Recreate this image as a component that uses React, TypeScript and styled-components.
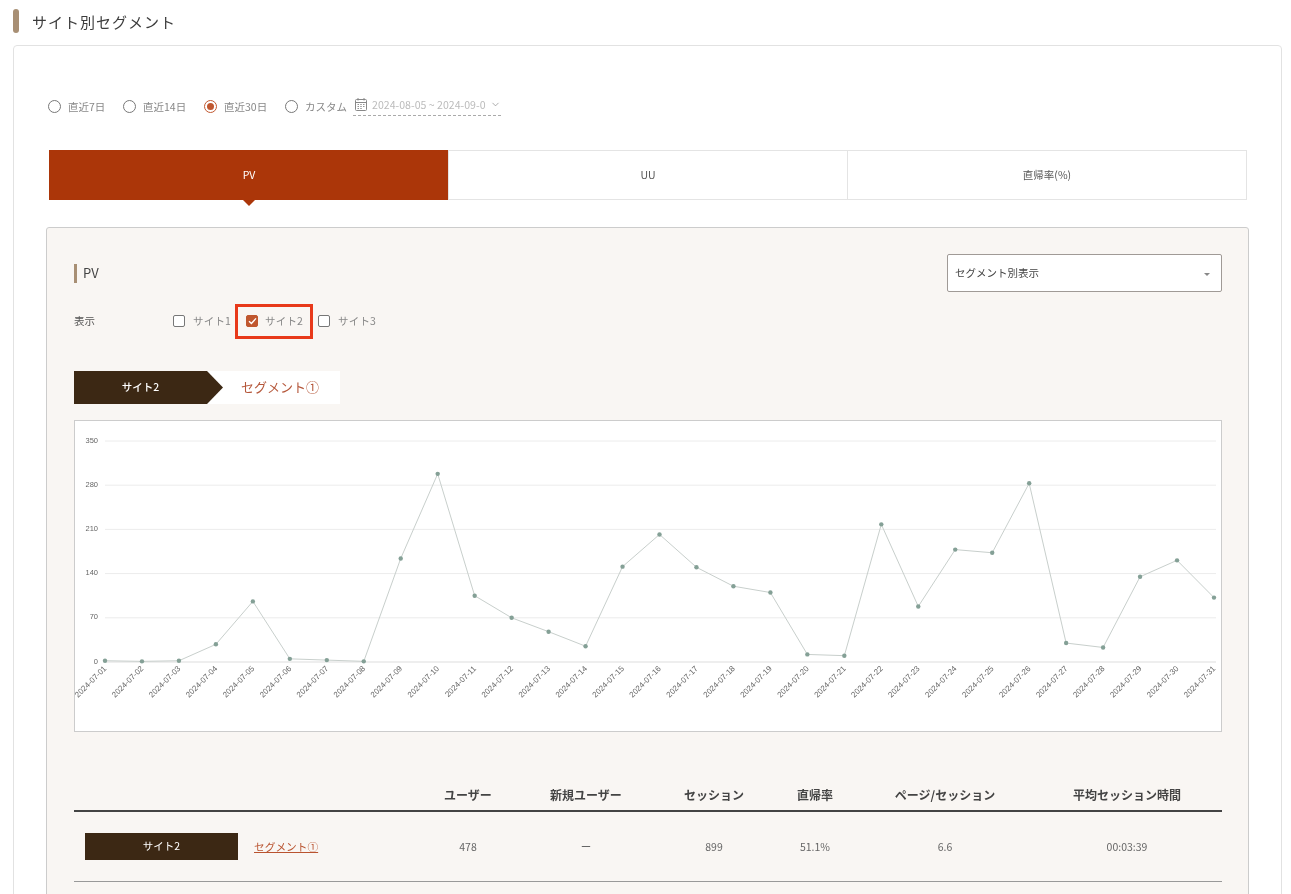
import { createGlobalStyle, styled } from 'styled-components';
import { ChevronDown } from 'lucide-react';

const FONT = `"Noto Sans CJK JP", "Noto Sans", sans-serif`;

const PV_VALUES = [
  2, 1, 2, 28, 96, 5, 3, 1, 164, 298, 105, 70, 48, 25, 151, 202, 150, 120, 110,
  12, 10, 218, 88, 178, 173, 283, 30, 23, 135, 161, 102,
];
const Y_TICKS = [350, 280, 210, 140, 70, 0];
const PLOT = { left: 30, right: 1139, top: 20, bottom: 241, gridEnd: 1141 };

const RANGES = [
  { label: '直近7日', width: 75, checked: false },
  { label: '直近14日', width: 81, checked: false },
  { label: '直近30日', width: 81, checked: true },
  { label: 'カスタム', width: 68, checked: false },
];
const TABS = ['PV', 'UU', '直帰率(%)'];
const SITES = [
  { label: 'サイト1', checked: false },
  { label: 'サイト2', checked: true },
  { label: 'サイト3', checked: false },
];
const COLUMNS = [
  { head: 'ユーザー', value: '478', width: 96 },
  { head: '新規ユーザー', value: 'ー', width: 140 },
  { head: 'セッション', value: '899', width: 116 },
  { head: '直帰率', value: '51.1%', width: 86 },
  { head: 'ページ/セッション', value: '6.6', width: 174 },
  { head: '平均セッション時間', value: '00:03:39', width: 190 },
];

const xAt = (i: number) => PLOT.left + (i * (PLOT.right - PLOT.left)) / 30;
const yAt = (v: number) =>
  PLOT.bottom - (v * (PLOT.bottom - PLOT.top)) / 350;
const dateLabel = (i: number) =>
  `2024-07-${String(i + 1).padStart(2, '0')}`;

function LineChart() {
  const line = PV_VALUES.map((v, i) => `${xAt(i)},${yAt(v)}`).join(' ');

  return (
    <ChartSvg viewBox="0 0 1146 310">
      {Y_TICKS.map((tick) => (
        <g key={tick}>
          <line
            x1={PLOT.left}
            x2={PLOT.gridEnd}
            y1={yAt(tick)}
            y2={yAt(tick)}
            stroke={tick === 0 ? '#e8e8e8' : '#ececec'}
            strokeWidth={tick === 0 ? 1.5 : 1}
          />
          <text
            x={23}
            y={yAt(tick) + 1.5}
            textAnchor="end"
            fontSize="7.5"
            fill="#666"
          >
            {tick}
          </text>
        </g>
      ))}
      <polyline points={line} fill="none" stroke="#c8cfcc" strokeWidth="1" />
      {PV_VALUES.map((v, i) => (
        <circle key={i} cx={xAt(i)} cy={yAt(v)} r="2.2" fill="#84a096" />
      ))}
      {PV_VALUES.map((_, i) => (
        <text
          key={i}
          x={xAt(i) + 2}
          y={248}
          textAnchor="end"
          fontSize="8"
          fill="#666"
          transform={`rotate(-45 ${xAt(i) + 2} 248)`}
        >
          {dateLabel(i)}
        </text>
      ))}
    </ChartSvg>
  );
}

function CalendarIcon() {
  return (
    <svg width="15" height="15" viewBox="0 0 15 15" fill="none" stroke="#888">
      <rect x="2.5" y="2.5" width="11" height="11" rx="1" />
      <path d="M2.5 5.5 H13.5 M5 1 V3.5 M11 1 V3.5" />
      <path
        d="M4.5 7.5 H6 M7.25 7.5 H8.75 M10 7.5 H11.5 M4.5 9.5 H6 M7.25 9.5 H8.75 M10 9.5 H11.5 M4.5 11.5 H6 M7.25 11.5 H8.75"
        strokeWidth="0.9"
      />
    </svg>
  );
}

function App() {
  return (
    <Page>
      <GlobalStyle />
      <PageTitle>サイト別セグメント</PageTitle>
      <Card>
        <RangeRow>
          {RANGES.map((range) => (
            <RangeOption key={range.label} $width={range.width}>
              <Radio $checked={range.checked} />
              <RangeLabel>{range.label}</RangeLabel>
            </RangeOption>
          ))}
          <DatePicker>
            <CalendarIcon />
            <DateText>2024-08-05 ~ 2024-09-03</DateText>
            <ChevronDown size={11} strokeWidth={1.5} color="#888" />
          </DatePicker>
        </RangeRow>

        <Tabs>
          {TABS.map((tab, i) => (
            <Tab key={tab} $active={i === 0}>
              {tab}
            </Tab>
          ))}
        </Tabs>

        <Panel>
          <PanelHead>
            <PanelTitle>PV</PanelTitle>
            <Select>
              セグメント別表示
              <SelectCaret />
            </Select>
          </PanelHead>

          <DisplayRow>
            <DisplayLabel>表示</DisplayLabel>
            {SITES.map((site) => (
              <SiteOption key={site.label} $highlight={site.checked}>
                <Checkbox $checked={site.checked}>
                  {site.checked && (
                    <svg width="9" height="8" viewBox="0 0 9 8">
                      <path
                        d="M1 4.2 L3.4 6.4 L8 1.4"
                        fill="none"
                        stroke="#fff"
                        strokeWidth="1.4"
                      />
                    </svg>
                  )}
                </Checkbox>
                <SiteLabel>{site.label}</SiteLabel>
              </SiteOption>
            ))}
          </DisplayRow>

          <Stepper>
            <StepCurrent>サイト2</StepCurrent>
            <StepNext>セグメント①</StepNext>
          </Stepper>

          <ChartBox>
            <LineChart />
          </ChartBox>

          <Table>
            <HeadRow>
              <NameCell />
              {COLUMNS.map((col) => (
                <HeadCell key={col.head} $width={col.width}>
                  {col.head}
                </HeadCell>
              ))}
            </HeadRow>
            <BodyRow>
              <NameCell>
                <SiteBadge>サイト2</SiteBadge>
                <SegmentLink>セグメント①</SegmentLink>
              </NameCell>
              {COLUMNS.map((col) => (
                <BodyCell key={col.head} $width={col.width}>
                  {col.value}
                </BodyCell>
              ))}
            </BodyRow>
          </Table>
        </Panel>
      </Card>
    </Page>
  );
}

const GlobalStyle = createGlobalStyle`
  html, body {
    margin: 0;
    padding: 0;
    background: #fff;
    font-family: ${FONT};
    color: #333;
  }
  * {
    box-sizing: border-box;
  }
`;

const Page = styled.div`
  height: 894px;
  overflow: hidden;
  padding: 9px 9px 0 13px;
  will-change: transform;
`;

const PageTitle = styled.h1`
  display: flex;
  gap: 13px;
  height: 24px;
  margin: 0 0 12px;
  font-size: 15px;
  font-weight: 400;
  line-height: 26px;
  letter-spacing: 1px;
  color: #3c3c3c;

  &::before {
    content: '';
    width: 6px;
    height: 24px;
    border-radius: 3px;
    background: #a88f74;
  }
`;

const Card = styled.div`
  height: 900px;
  padding: 0 32px;
  border: 1px solid #e2e2e2;
  border-radius: 4px;
`;

const RangeRow = styled.div`
  display: flex;
  align-items: center;
  height: 22px;
  margin-top: 49px;
  padding-left: 2px;
`;

const RangeOption = styled.label<{ $width: number }>`
  display: flex;
  align-items: center;
  gap: 7px;
  width: ${(props) => props.$width}px;
`;

const Radio = styled.span<{ $checked: boolean }>`
  flex: none;
  position: relative;
  width: 13px;
  height: 13px;
  border: 1px solid ${(props) => (props.$checked ? '#c0572f' : '#777')};
  border-radius: 50%;
  background: #fff;

  &::after {
    content: '';
    display: ${(props) => (props.$checked ? 'block' : 'none')};
    position: absolute;
    inset: 2px;
    border-radius: 50%;
    background: #c0572f;
  }
`;

const RangeLabel = styled.span`
  font-size: 10.5px;
  color: #888;
  white-space: nowrap;
`;

const DatePicker = styled.div`
  display: flex;
  align-items: center;
  align-self: flex-start;
  gap: 4px;
  width: 148px;
  height: 21px;
  padding-bottom: 2px;
  border-bottom: 1px dashed #aaa;
`;

const DateText = styled.span`
  flex: none;
  width: 114px;
  overflow: hidden;
  font-size: 10.6px;
  color: #bbb;
  white-space: nowrap;
`;

const Tabs = styled.div`
  display: flex;
  margin: 33px 3px 0 3px;
`;

const Tab = styled.div<{ $active: boolean }>`
  position: relative;
  flex: 1;
  height: 50px;
  margin-right: -1px;
  border: 1px solid ${(props) => (props.$active ? '#ab3609' : '#e4e4e4')};
  background: ${(props) => (props.$active ? '#ab3609' : '#fff')};
  color: ${(props) => (props.$active ? '#fff' : '#555')};
  font-size: 10.5px;
  line-height: 48px;
  text-align: center;

  &::after {
    content: '';
    display: ${(props) => (props.$active ? 'block' : 'none')};
    position: absolute;
    left: 50%;
    top: 49px;
    margin-left: -6px;
    border-style: solid;
    border-width: 6px 6px 0;
    border-color: #ab3609 transparent transparent;
  }
`;

const Panel = styled.div`
  height: 800px;
  margin-top: 27px;
  padding: 26px 26px 0 27px;
  border: 1px solid #ccc;
  border-radius: 3px;
  background: #f9f6f3;
`;

const PanelHead = styled.div`
  display: flex;
  justify-content: space-between;
  align-items: center;
  height: 38px;
`;

const PanelTitle = styled.h2`
  height: 19px;
  margin: 0;
  padding-left: 6px;
  border-left: 3px solid #a88f74;
  font-size: 13px;
  font-weight: 400;
  line-height: 18px;
  color: #444;
`;

const Select = styled.div`
  position: relative;
  width: 275px;
  height: 38px;
  padding-left: 7px;
  border: 1px solid #a09a96;
  border-radius: 2px;
  background: #fff;
  font-size: 10.5px;
  line-height: 35px;
  color: #444;
`;

const SelectCaret = styled.span`
  position: absolute;
  right: 11px;
  top: 18px;
  border-style: solid;
  border-width: 3.5px 3.5px 0;
  border-color: #888 transparent transparent;
`;

const DisplayRow = styled.div`
  display: flex;
  align-items: center;
  height: 35px;
  margin-top: 12px;
`;

const DisplayLabel = styled.div`
  width: 94px;
  margin-top: -2px;
  font-size: 10.5px;
  color: #555;
`;

const SiteOption = styled.label<{ $highlight: boolean }>`
  display: flex;
  align-items: center;
  gap: ${(props) => (props.$highlight ? '7px' : '8px')};
  height: 35px;
  margin-left: ${(props) => (props.$highlight ? '-1px' : '0')};
  padding: ${(props) => (props.$highlight ? '0 7px 2px 8px' : '0 2px 2px')};
  border: 3px solid ${(props) => (props.$highlight ? '#e8391a' : 'transparent')};
`;

const Checkbox = styled.span<{ $checked: boolean }>`
  display: flex;
  align-items: center;
  justify-content: center;
  width: 12px;
  height: 12px;
  border: 1px solid ${(props) => (props.$checked ? '#c0572f' : '#777')};
  border-radius: 2px;
  background: ${(props) => (props.$checked ? '#c0572f' : '#fff')};
`;

const SiteLabel = styled.span`
  width: 38px;
  font-size: 10.5px;
  letter-spacing: 0.2px;
  color: #888;
  white-space: nowrap;
`;

const Stepper = styled.div`
  display: flex;
  width: 266px;
  height: 33px;
  margin-top: 32px;
  background: #fff;
`;

const StepCurrent = styled.div`
  width: 149px;
  padding-right: 16px;
  clip-path: polygon(0 0, 133px 0, 100% 50%, 133px 100%, 0 100%);
  background: #3c2814;
  color: #fff;
  font-size: 10.5px;
  font-weight: 500;
  line-height: 31px;
  text-align: center;
`;

const StepNext = styled.div`
  flex: 1;
  padding-left: 18px;
  color: #b5573a;
  font-size: 13px;
  font-weight: 400;
  line-height: 31px;
  white-space: nowrap;
`;

const ChartBox = styled.div`
  height: 312px;
  margin-top: 16px;
  border: 1px solid #ccc;
  background: #fff;
`;

const ChartSvg = styled.svg`
  display: block;
  width: 1146px;
  height: 310px;
  font-family: 'Liberation Sans', sans-serif;
`;

const Table = styled.div`
  margin-top: 49px;
`;

const HeadRow = styled.div`
  display: flex;
  align-items: center;
  height: 31px;
  border-bottom: 2px solid #444;
`;

const BodyRow = styled.div`
  display: flex;
  align-items: center;
  height: 70px;
  border-bottom: 1px solid #999;
`;

const NameCell = styled.div`
  display: flex;
  align-items: center;
  flex: 1;
  padding-left: 11px;
`;

const HeadCell = styled.div<{ $width: number }>`
  flex: none;
  width: ${(props) => props.$width}px;
  margin-top: -3px;
  font-size: 12px;
  font-weight: 700;
  color: #444;
  text-align: center;
  white-space: nowrap;
`;

const BodyCell = styled.div<{ $width: number }>`
  flex: none;
  width: ${(props) => props.$width}px;
  font-size: 10.5px;
  color: #666;
  text-align: center;
`;

const SiteBadge = styled.div`
  width: 153px;
  height: 27px;
  background: #3c2814;
  color: #fff;
  font-size: 10.5px;
  line-height: 25px;
  text-align: center;
`;

const SegmentLink = styled.a`
  margin-left: 16px;
  color: #b9532f;
  font-size: 10.7px;
  text-decoration: underline;
  white-space: nowrap;
`;

export default App;
